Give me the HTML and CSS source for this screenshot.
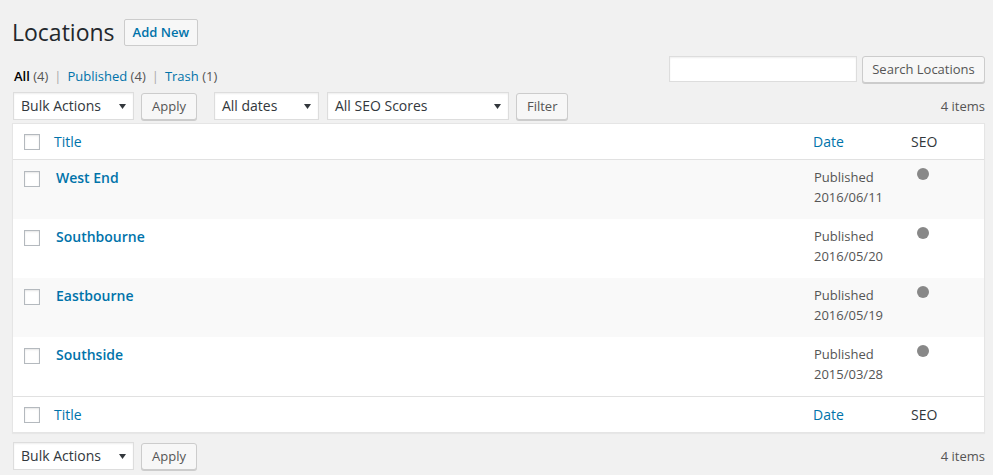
FILE: index.html
```html
<!DOCTYPE html>
<html lang="en">
<head>
<meta charset="utf-8">
<title>Locations</title>
<link rel="stylesheet" href="styles.css">
</head>
<body>
<div class="wrap">
  <div class="page-head">
    <h1 class="page-title">Locations</h1>
    <a class="page-title-action" href="#">Add New</a>
  </div>

  <div class="filters-row">
    <ul class="subsubsub">
      <li><a class="current" href="#">All <span class="count">(4)</span></a><span class="sep">|</span></li>
      <li><a href="#">Published <span class="count">(4)</span></a><span class="sep">|</span></li>
      <li><a href="#">Trash <span class="count">(1)</span></a></li>
    </ul>
    <div class="search-box">
      <span class="search-input"></span>
      <span class="button btn-search">Search Locations</span>
    </div>
  </div>

  <div class="tablenav">
    <div class="select select-bulk"><span>Bulk Actions</span><svg class="arrow" width="7" height="5" viewBox="0 0 7 5"><path d="M0 0H7L3.5 5Z" fill="#32373c"/></svg></div>
    <span class="button btn-apply">Apply</span>
    <div class="select select-dates"><span>All dates</span><svg class="arrow" width="7" height="5" viewBox="0 0 7 5"><path d="M0 0H7L3.5 5Z" fill="#32373c"/></svg></div>
    <div class="select select-seo"><span>All SEO Scores</span><svg class="arrow" width="7" height="5" viewBox="0 0 7 5"><path d="M0 0H7L3.5 5Z" fill="#32373c"/></svg></div>
    <span class="button btn-filter">Filter</span>
    <span class="num-items">4 items</span>
  </div>

  <table class="list-table">
    <colgroup>
      <col class="col-check">
      <col class="col-title">
      <col class="col-date">
      <col class="col-seo">
    </colgroup>
    <thead>
      <tr>
        <th class="check-column"><span class="checkbox"></span></th>
        <th class="th-title"><a href="#">Title</a></th>
        <th class="th-date"><a href="#">Date</a></th>
        <th class="th-seo">SEO</th>
      </tr>
    </thead>
    <tbody>
      <tr class="alt">
        <td class="check-column"><span class="checkbox"></span></td>
        <td class="td-title"><a href="#">West End</a></td>
        <td class="td-date">Published<br>2016/06/11</td>
        <td class="td-seo"><span class="dot"></span></td>
      </tr>
      <tr>
        <td class="check-column"><span class="checkbox"></span></td>
        <td class="td-title"><a href="#">Southbourne</a></td>
        <td class="td-date">Published<br>2016/05/20</td>
        <td class="td-seo"><span class="dot"></span></td>
      </tr>
      <tr class="alt">
        <td class="check-column"><span class="checkbox"></span></td>
        <td class="td-title"><a href="#">Eastbourne</a></td>
        <td class="td-date">Published<br>2016/05/19</td>
        <td class="td-seo"><span class="dot"></span></td>
      </tr>
      <tr>
        <td class="check-column"><span class="checkbox"></span></td>
        <td class="td-title"><a href="#">Southside</a></td>
        <td class="td-date">Published<br>2015/03/28</td>
        <td class="td-seo"><span class="dot"></span></td>
      </tr>
    </tbody>
    <tfoot>
      <tr>
        <th class="check-column"><span class="checkbox"></span></th>
        <th class="th-title"><a href="#">Title</a></th>
        <th class="th-date"><a href="#">Date</a></th>
        <th class="th-seo">SEO</th>
      </tr>
    </tfoot>
  </table>

  <div class="tablenav tablenav-bottom">
    <div class="select select-bulk"><span>Bulk Actions</span><svg class="arrow" width="7" height="5" viewBox="0 0 7 5"><path d="M0 0H7L3.5 5Z" fill="#32373c"/></svg></div>
    <span class="button btn-apply">Apply</span>
    <span class="num-items">4 items</span>
  </div>
</div>
</body>
</html>
```

FILE: styles.css
```css
* {
  box-sizing: border-box;
}

html, body {
  margin: 0;
  padding: 0;
}

body {
  background: #f1f1f1;
  color: #444;
  font-family: "Open Sans", "Liberation Sans", sans-serif;
  font-size: 13px;
  line-height: 1.4em;
}

a {
  color: #0073aa;
  text-decoration: none;
}

.wrap {
  padding: 0 8px 0 12px;
}

/* Heading */
.page-head {
  display: flex;
  align-items: center;
  height: 29px;
  margin-top: 18px;
}

.page-title {
  margin: 0;
  font-size: 23px;
  font-weight: 400;
  line-height: 29px;
  color: #23282d;
}

.page-title-action {
  margin-left: 9px;
  height: 27px;
  display: flex;
  align-items: center;
  padding: 0 8px;
  border: 1px solid #ccc;
  border-radius: 2px;
  background: #f7f7f7;
  font-weight: 600;
  font-size: 13px;
  color: #0073aa;
}

/* Views + search */
.filters-row {
  display: flex;
  justify-content: space-between;
  align-items: flex-start;
  height: 30px;
  margin-top: 9px;
}

.subsubsub {
  list-style: none;
  margin: 10px 0 0 0;
  padding: 0 0 0 2px;
  display: flex;
  line-height: 20px;
  font-size: 13px;
  color: #555;
}

.subsubsub li {
  display: flex;
}

.subsubsub .current {
  color: #000;
  font-weight: 600;
}

.subsubsub .count {
  color: #555;
  font-weight: 400;
}

.subsubsub .sep {
  color: #aaa;
  margin: 0 6px 0 6px;
}

.search-box {
  display: flex;
  align-items: flex-start;
}

.search-input {
  display: block;
  width: 188px;
  height: 26px;
  background: #fff;
  border: 1px solid #ddd;
  box-shadow: inset 0 1px 2px rgba(0, 0, 0, 0.07);
  margin-right: 5px;
}

/* Buttons */
.button {
  display: inline-flex;
  align-items: center;
  justify-content: center;
  height: 27px;
  padding: 0 10px;
  background: #f7f7f7;
  border: 1px solid #ccc;
  border-radius: 3px;
  box-shadow: 0 1px 0 #ccc;
  color: #555;
  font-size: 13px;
  white-space: nowrap;
}

.btn-search {
  width: 123px;
  padding: 0;
}

/* Tablenav */
.tablenav {
  display: flex;
  align-items: center;
  height: 30px;
  margin-top: 5px;
}

.tablenav-bottom {
  margin-top: 8px;
}

.select {
  display: flex;
  align-items: center;
  height: 28px;
  padding: 1px 7px 0 7px;
  background: #fff;
  border: 1px solid #ddd;
  box-shadow: inset 0 1px 2px rgba(0, 0, 0, 0.07);
  color: #32373c;
  font-size: 14px;
}

.select .arrow {
  margin-left: auto;
  flex: none;
}

.select-bulk {
  margin-left: 1px;
  width: 121px;
}

.btn-apply {
  margin-left: 7px;
}

.select-dates {
  margin-left: 17px;
  width: 105px;
}

.select-seo {
  margin-left: 8px;
  width: 182px;
}

.btn-filter {
  margin-left: 7px;
}

.num-items {
  margin-left: auto;
  color: #555;
  font-size: 13px;
}

/* Table */
.list-table {
  width: 100%;
  table-layout: fixed;
  border-collapse: separate;
  border-spacing: 0;
  border: 1px solid #e5e5e5;
  background: #fff;
  box-shadow: 0 1px 1px rgba(0, 0, 0, 0.04);
  margin-top: 2px;
}

.col-check { width: 31px; }
.col-date { width: 98px; }
.col-seo { width: 83px; }

.list-table th {
  height: 36px;
  padding: 2px 10px 0 10px;
  text-align: left;
  font-weight: 400;
  font-size: 14px;
  color: #32373c;
  vertical-align: middle;
}

.list-table thead th {
  border-bottom: 1px solid #e1e1e1;
}

.list-table tfoot th {
  border-top: 1px solid #e1e1e1;
}

.list-table th.check-column {
  padding: 1px 0 0 11px;
}

.list-table td {
  height: 59px;
  padding: 8px 10px;
  vertical-align: top;
  color: #555;
  font-size: 13px;
  line-height: 19.5px;
}

.list-table td.check-column {
  padding: 11px 0 0 11px;
}

.list-table tbody tr.alt td {
  background: #f9f9f9;
}

.checkbox {
  display: block;
  width: 16px;
  height: 16px;
  background: #fff;
  border: 1px solid #b4b9be;
  box-shadow: inset 0 1px 2px rgba(0, 0, 0, 0.1);
}

.list-table td.td-title {
  padding-left: 12px;
  padding-top: 7px;
}

.td-title a {
  font-size: 14px;
  font-weight: 600;
  line-height: 21px;
}

.list-table td.td-date {
  padding-top: 8px;
  padding-left: 11px;
}

.dot {
  display: block;
  width: 12px;
  height: 12px;
  border-radius: 50%;
  background: #888;
  margin-left: 6px;
}
```
